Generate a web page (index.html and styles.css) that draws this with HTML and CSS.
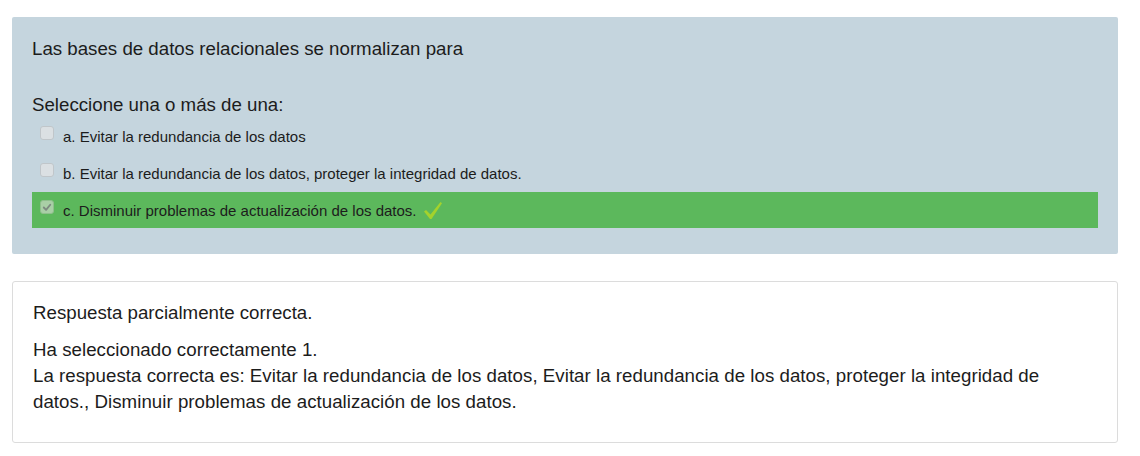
FILE: index.html
```html
<!DOCTYPE html>
<html lang="es">
<head>
<meta charset="utf-8">
<title>Pregunta</title>
<link rel="stylesheet" href="styles.css">
</head>
<body>
<div class="page">
  <div class="formulation">
    <p class="qtext">Las bases de datos relacionales se normalizan para</p>
    <p class="prompt">Seleccione una o más de una:</p>
    <div class="answers">
      <div class="option">
        <span class="cbox"></span>
        <span class="label">a. Evitar la redundancia de los datos</span>
      </div>
      <div class="option">
        <span class="cbox"></span>
        <span class="label">b. Evitar la redundancia de los datos, proteger la integridad de datos.</span>
      </div>
      <div class="option correct">
        <span class="cbox checked">
          <svg viewBox="0 0 13 13" width="13" height="13"><path d="M3 6.5 L5.5 9 L10 3.5" fill="none" stroke="#7d8a80" stroke-width="2" stroke-linecap="round" stroke-linejoin="round"/></svg>
        </span>
        <span class="label">c. Disminuir problemas de actualización de los datos.</span>
        <svg class="tick" viewBox="0 0 20 19" width="20" height="19"><path d="M1 10.5 L3 9 L7.5 13.5 L17.5 1 L19 2.2 L8.5 18 L7 18 Z" fill="#a4d22c"/></svg>
      </div>
    </div>
  </div>
  <div class="outcome">
    <p class="feedback">Respuesta parcialmente correcta.</p>
    <p class="right">Ha seleccionado correctamente 1.<br>La respuesta correcta es: Evitar la redundancia de los datos, Evitar la redundancia de los datos, proteger la integridad de datos., Disminuir problemas de actualización de los datos.</p>
  </div>
</div>
</body>
</html>
```

FILE: styles.css
```css
* { box-sizing: border-box; }
html, body { margin: 0; padding: 0; background: #fff; }
body {
  font-family: "Liberation Sans", Arial, sans-serif;
  color: #1c1c1c;
}
.page {
  width: 1106px;
  margin: 17px 0 0 12px;
  display: flex;
  flex-direction: column;
  gap: 27px;
}
p { margin: 0; }
.formulation {
  background: #c5d5de;
  border-radius: 2px;
  padding: 19px 20px 26px;
}
.qtext, .prompt, .feedback, .right {
  font-size: 18.7px;
  line-height: 26px;
}
.prompt { margin-top: 30px; }
.answers {
  display: flex;
  flex-direction: column;
  gap: 1px;
}
.option {
  height: 36px;
  display: flex;
  align-items: center;
  padding-left: 8px;
  font-size: 15px;
}
.option.correct { background: #5cb85c; }
.cbox {
  width: 14px;
  height: 14px;
  border: 1px solid #c0c6ca;
  border-radius: 3px;
  background: #dbe0e3;
  margin-right: 9px;
  margin-bottom: 6px;
  flex: none;
  display: flex;
  align-items: center;
  justify-content: center;
}
.cbox svg { display: block; }
.cbox.checked {
  background: #a9cfa6;
  border-color: #8fbf8c;
}
.tick { margin-left: 6px; display: block; }
.outcome {
  border: 1px solid #dcdcdc;
  border-radius: 3px;
  padding: 18px 20px 27px;
}
.right { margin-top: 11px; letter-spacing: 0.03px; }
```
